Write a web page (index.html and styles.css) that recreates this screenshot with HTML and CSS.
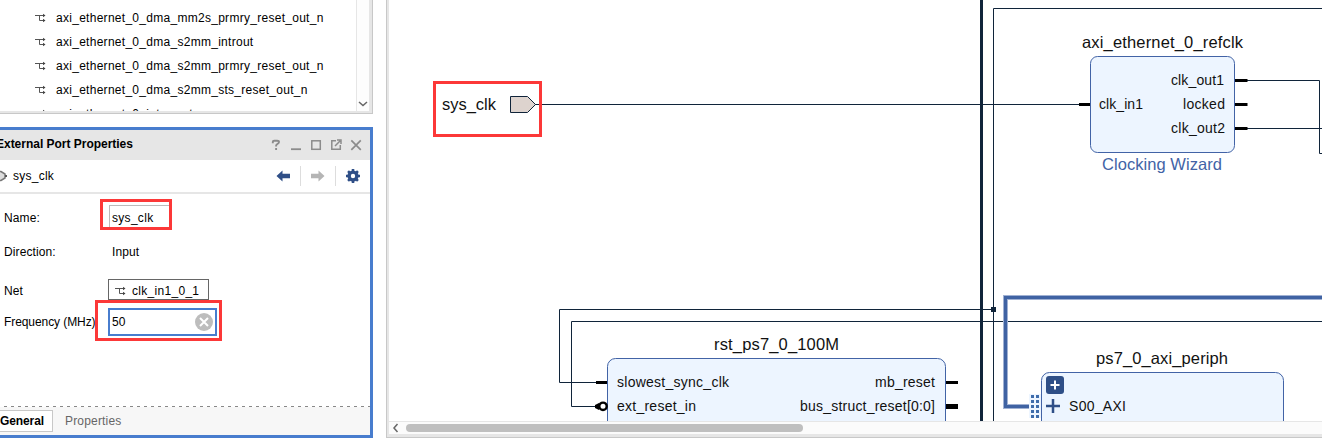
FILE: index.html
```html
<!DOCTYPE html>
<html lang="en">
<head>
<meta charset="utf-8">
<title>Block Design</title>
<link rel="stylesheet" href="styles.css">
</head>
<body>
<svg class="defs" width="0" height="0">
  <symbol id="net" viewBox="0 0 12 10"><path d="M0 2.500H10M4.500 2.500V7.500H10" fill="none" stroke="#555" stroke-width="1"/><path d="M8 .8v3.400l2.500-1.700zM8 5.800v3.400l2.500-1.700z" fill="#444"/></symbol>
</svg>
<div class="app">
  <div class="left">
    <section class="nets">
      <ul class="net-list">
        <li><svg class="net-icon"><use href="#net"/></svg><span>axi_ethernet_0_dma_mm2s_prmry_reset_out_n</span></li>
        <li><svg class="net-icon"><use href="#net"/></svg><span>axi_ethernet_0_dma_s2mm_introut</span></li>
        <li><svg class="net-icon"><use href="#net"/></svg><span>axi_ethernet_0_dma_s2mm_prmry_reset_out_n</span></li>
        <li><svg class="net-icon"><use href="#net"/></svg><span>axi_ethernet_0_dma_s2mm_sts_reset_out_n</span></li>
        <li><svg class="net-icon"><use href="#net"/></svg><span>axi_ethernet_0_interrupt</span></li>
      </ul>
      <div class="vscroll"><svg width="10" height="6" viewBox="0 0 10 6"><path d="M1 1l4 3.500L9 1" fill="none" stroke="#666" stroke-width="1.500"/></svg></div>
    </section>
    <section class="props">
      <header class="title"><h2>External Port Properties</h2>
        <svg width="92" height="14" viewBox="271 139 92 14" fill="none" stroke="#8c8c8c" stroke-width="1.500">
          <path d="M272.800 144.300v-1.300q0-1.300 1.400-1.300h3q1.800 0 1.800 1.400 0 1.200-1.400 1.700-1.500.6-1.500 2v.7M276.100 149v2" stroke-width="1.900"/>
          <path d="M291 150.200h10" stroke-width="1.800"/>
          <rect x="311.800" y="141.800" width="8.500" height="8.500"/>
          <path d="M336 141.800h-4.200v8.500h8.500v-4.300M335 147l5-5M337 141h4v4"/>
          <path d="M351.300 141.300l9.500 9.500M360.800 141.300l-9.500 9.500" stroke-width="1.700"/>
        </svg>
      </header>
      <div class="toolbar">
        <svg class="port" width="8" height="12" viewBox="0 0 8 12"><path d="M-4 1.500H1L5 4v4L1 10.500h-5z" fill="#ddd" stroke="#777" stroke-width="1.500"/><path d="M5 6h2" stroke="#555" stroke-width="2"/></svg>
        <span>sys_clk</span>
        <svg class="actions" width="86" height="20" viewBox="276 166 86 20">
          <path d="M276.500 176l6-5.500v3.200h7.500v4.600h-7.500v3.200z" fill="#2f4f87"/>
          <path d="M324.500 176l-6-5.500v3.200H311v4.600h7.500v3.200z" fill="#b5b5b5"/>
          <path d="M300.500 166v20M335.500 166v20" stroke="#ddd"/>
          <g stroke="#2f4f87" fill="none"><circle cx="353" cy="176" r="3.900" stroke-width="3.400"/><path d="M353 169v3M353 180v3M346 176h3M357 176h3M348.050 171.050l2 2M357.950 171.050l-2 2M348.050 180.950l2-2M357.950 180.950l-2-2" stroke-width="2.600"/></g>
        </svg>
      </div>
      <div class="form">
        <div class="row name"><label>Name:</label><div class="mark mark-name"><div class="input-name">sys_clk</div></div></div>
        <div class="row dir"><label>Direction:</label><span class="value">Input</span></div>
        <div class="row net"><label>Net</label><div class="net-button"><svg class="net-icon"><use href="#net"/></svg><span>clk_in1_0_1</span></div></div>
        <div class="row freq"><label>Frequency (MHz)</label><div class="mark mark-freq"><div class="input-freq"><span>50</span>
          <svg width="18" height="18" viewBox="0 0 18 18"><circle cx="9" cy="9" r="9" fill="#bdbdbd"/><path d="M5 5l8 8M13 5l-8 8" stroke="#fff" stroke-width="2"/></svg></div></div></div>
      </div>
      <svg class="dash" width="370" height="1"><path d="M-1 .5H370" stroke="#888" stroke-dasharray="3 4" stroke-dashoffset="-5"/></svg>
      <footer class="tabs"><span class="tab active">General</span><span class="tab">Properties</span></footer>
    </section>
  </div>
  <main class="diagram">
    <svg class="canvas" width="933" height="421" viewBox="389 0 933 421">
      <g class="blocks">
        <rect x="1090.500" y="56.500" width="144" height="96" rx="7"/>
        <rect x="607.500" y="358.500" width="338" height="90" rx="8"/>
        <rect x="1041.500" y="372.500" width="242" height="90" rx="8"/>
      </g>
      <g class="wires">
        <path d="M535 104.500H1080M993.500 421V8.500H1322M1246 80.500H1319.500V153.500H1322M1246 128.500H1322M597 382.500H559.500V309.500H993.500M597 406.500H571.500V321.500H1322"/>
        <path d="M981.500 0V421" stroke-width="3"/>
      </g>
      <rect x="991" y="307" width="5" height="5" fill="#10243a"/>
      <path class="bus-halo" d="M1322 297.500H1005.500V406.500H1030"/>
      <path class="bus" d="M1322 297.500H1005.500V406.500H1030"/>
      <path class="pins" d="M1079 104.500h11M1235 80.500h12.500M1235 104.500h12.500M1235 128.500h12.500M596 382.500h11M946 382.500h12"/>
      <path d="M946 406.500h12" stroke="#000" stroke-width="5"/>
      <path d="M595 405l4-2v7l-4-2z"/><circle cx="603" cy="406.300" r="3.700" fill="#fff" stroke="#000" stroke-width="2.400"/>
      <path d="M510.500 96.500H527.500L535.500 104.500 527.500 112.500H510.500z" fill="#ddd3ce" stroke="#10243a"/>
      <rect x="1029" y="394" width="12" height="24" fill="#edf5ff"/>
      <path d="M1032.500 395v23M1037.500 395v23" stroke="#3e6cab" stroke-width="3" stroke-dasharray="3 2"/>
      <rect x="1046" y="376" width="18" height="18" rx="3" fill="#2f4f87"/>
      <path d="M1050.500 385h9M1055 380.500v9" stroke="#fff" stroke-width="2"/>
      <path d="M1046 406h14M1053 399v14" stroke="#2f4f87" stroke-width="2.500"/>
      <rect x="434.500" y="82.500" width="106" height="53" fill="none" stroke="#fc3838" stroke-width="3"/>
      <g class="names">
        <text x="442" y="110" textLength="54">sys_clk</text>
        <text x="1082" y="48" textLength="161">axi_ethernet_0_refclk</text>
        <text x="714" y="350" textLength="125">rst_ps7_0_100M</text>
        <text x="1096" y="364" textLength="132">ps7_0_axi_periph</text>
        <text class="kind" x="1102" y="170" textLength="120">Clocking Wizard</text>
      </g>
      <g class="ports">
        <text x="1099" y="109" textLength="44">clk_in1</text>
        <text x="1171" y="85" textLength="53">clk_out1</text>
        <text x="1183" y="109" textLength="42">locked</text>
        <text x="1171" y="133" textLength="54">clk_out2</text>
        <text x="617" y="387" textLength="112">slowest_sync_clk</text>
        <text x="617" y="411" textLength="79">ext_reset_in</text>
        <text x="875" y="387" textLength="60">mb_reset</text>
        <text x="800" y="411" textLength="135">bus_struct_reset[0:0]</text>
        <text x="1069" y="411" textLength="57">S00_AXI</text>
      </g>
    </svg>
    <div class="hscroll"><svg width="8" height="10" viewBox="0 0 8 10"><path d="M5.500 1L2 5l3.500 4" fill="none" stroke="#666" stroke-width="1.500"/></svg><div class="thumb"></div></div>
  </main>
</div>
</body>
</html>
```

FILE: styles.css
```css
* { box-sizing: border-box; }
body { margin: 0; background: #fff; color: #000; font: 12px/16px "Liberation Sans", Arial, sans-serif; overflow: hidden; }
.defs { display: block; }
svg { display: block; flex: none; }
.app { display: flex; gap: 13px; width: 1322px; height: 438px; }
.left { width: 373px; display: flex; flex-direction: column; gap: 13px; }
.nets { height: 114px; display: flex; border-right: 1px solid #c8c8c8; border-bottom: 1px solid #c8c8c8; box-shadow: inset -3px -2px #e6e6e6; padding: 0 3px 2px 0; }
.net-list { flex: 1; margin: 0; padding: 6px 0 0 35px; list-style: none; overflow: hidden; letter-spacing: .28px; }
.net-list li { height: 24px; display: flex; align-items: center; gap: 9px; white-space: nowrap; }
.net-icon { width: 12px; height: 10px; }
.vscroll { width: 13px; border-left: 1px solid #e6e6e6; background: #fdfdfd; display: flex; align-items: flex-end; justify-content: center; padding-bottom: 4px; }
.props { flex: 1; border: 3px solid #487dce; border-left: 0; display: flex; flex-direction: column; overflow: hidden; }
.title { height: 30px; background: #e6e6e6; display: flex; align-items: center; justify-content: space-between; padding-right: 7px; }
.title h2 { margin: -2px 0 0 -4px; font-size: 12px; letter-spacing: -.02px; }
.toolbar { height: 34px; border-bottom: 2px solid #e6e6e6; display: flex; align-items: center; gap: 5px; padding-right: 8px; letter-spacing: .25px; }
.actions { margin-left: auto; }
.form { height: 212px; padding: 5px 0 0 4px; }
.row { display: flex; align-items: center; }
.row label { width: 104px; flex: none; white-space: nowrap; letter-spacing: .1px; }
.name { height: 31px; }
.name label { margin-top: 6px; }
.mark { border: 3px solid #fc3838; margin-left: -8px; }
.mark-name { width: 72px; height: 31px; padding: 3px 0 0 6px; }
.input-name { border: 1px solid #bbb; border-right: 0; border-bottom: 0; height: 22px; padding: 4px 0 0 2px; line-height: 17px; letter-spacing: .3px; }
.dir { height: 44px; }
.value { margin-left: 4px; letter-spacing: .1px; }
.net { height: 21px; align-items: flex-start; margin-top: 5px; }
.net label { padding-top: 4px; }
.net-button { width: 101px; height: 21px; border: 1px solid #666; display: flex; align-items: center; gap: 5px; padding: 2px 0 0 6px; white-space: nowrap; letter-spacing: .3px; }
.freq { height: 41px; }
.row.freq label { width: 91px; margin-top: 3px; letter-spacing: -.08px; }
.mark-freq { width: 127px; height: 41px; margin-left: 0; padding: 5px 2px 5px 10px; }
.input-freq { border: 2px solid #487dce; height: 28px; display: flex; align-items: center; justify-content: space-between; padding: 0 2px; }
.tabs { flex: 1; background: #f7f7f7; display: flex; padding-top: 3px; }
.tab { height: 22px; line-height: 22px; padding-left: 12px; color: #666; letter-spacing: .18px; }
.active { width: 53px; line-height: 20px; border: 1px solid #c8c8c8; border-left: 0; background: #fff; color: #000; font-weight: bold; padding-left: 0; letter-spacing: -.1px; }
.diagram { flex: 1; border-left: 1px solid #c8c8c8; border-bottom: 1px solid #c8c8c8; box-shadow: inset 2px -3px #e6e6e6; padding-left: 2px; }
.canvas { font-family: "Liberation Sans", Arial, sans-serif; }
.blocks rect { fill: #edf5ff; stroke: #4263a6; }
.wires { fill: none; stroke: #10243a; }
.pins { fill: none; stroke: #000; stroke-width: 3; }
.bus-halo, .bus { fill: none; stroke: #a0b1d3; stroke-width: 5; }
.bus { stroke: #4063a3; stroke-width: 3; }
.names { font-size: 16.500px; fill: #111; }
.names .kind { fill: #4263a6; }
.ports { font-size: 14px; fill: #111; }
.hscroll { height: 13px; border-top: 1px solid #e6e6e6; background: #fbfbfb; display: flex; align-items: center; padding-left: 3px; gap: 6px; }
.thumb { width: 397px; height: 8px; border-radius: 4px; background: #bfbfbf; }
```
